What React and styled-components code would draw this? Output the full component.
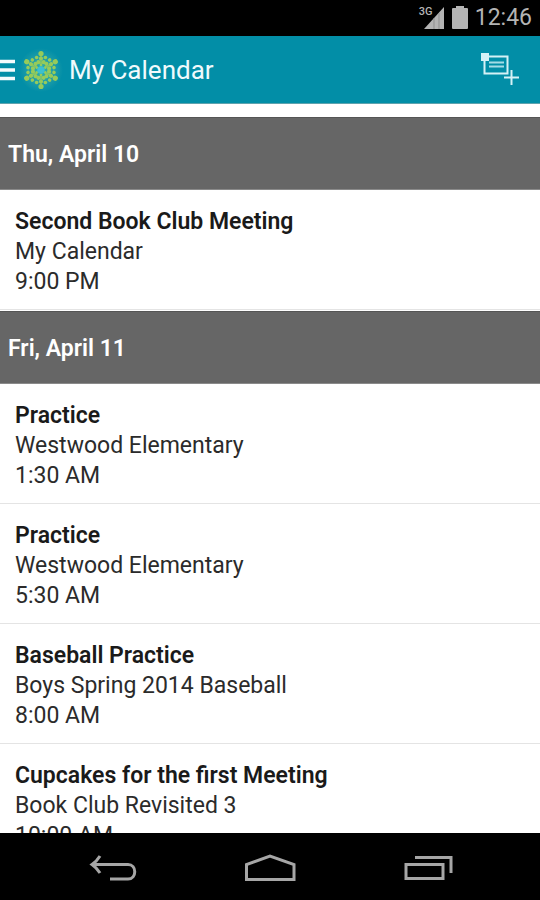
import React, { useState } from "react";
import styled, { createGlobalStyle } from "styled-components";

const GlobalStyle = createGlobalStyle`
  * {
    box-sizing: border-box;
  }

  body {
    margin: 0;
    background-color: #ffffff;
    font-family: Roboto, "Liberation Sans", sans-serif;
  }
`;

const Screen = styled.div`
  display: flex;
  flex-direction: column;
  height: 100vh;
  overflow: hidden;
`;

const StatusBar = styled.div`
  display: flex;
  align-items: center;
  justify-content: flex-end;
  flex-shrink: 0;
  gap: 7px;
  height: 36px;
  padding: 0 8px;
  background-color: #000000;
  color: #b4b4b4;
`;

const Signal = styled.div`
  display: flex;
  position: relative;
`;

const Network = styled.span`
  position: absolute;
  top: 0;
  left: 0;
  font-size: 11px;
  line-height: 11px;
  font-weight: 500;
`;

const Clock = styled.time`
  font-size: 23px;
  line-height: 36px;
`;

const AppBar = styled.header`
  display: flex;
  align-items: center;
  flex-shrink: 0;
  height: 68px;
  padding-right: 20px;
  background-color: #028ea7; // teal
  border-bottom: 1px solid #5fa3ae;
`;

const Title = styled.h1`
  flex: 1;
  margin: 0 0 0 6px;
  font-size: 26px;
  line-height: 32px;
  font-weight: normal;
  color: #f0fafc;
`;

const IconButton = styled.button`
  display: flex;
  align-items: center;
  justify-content: center;
  padding: 0;
  border: none;
  background: none;
  cursor: pointer;
`;

const MenuButton = styled(IconButton)`
  padding-right: 4px;
`;

const Agenda = styled.main`
  flex: 1;
  min-height: 0;
  padding-top: 13px;
  overflow-y: auto;
  scrollbar-width: none;
`;

const DayHeader = styled.h2`
  margin: 0;
  padding: 22px 8px 20px;
  background-color: #666666;
  border-top: 1px solid #555555;
  border-bottom: 1px solid #8a8a8a;
  font-size: 23px;
  line-height: 29px;
  font-weight: 600;
  color: #ffffff;
`;

const EventList = styled.ul`
  margin: 0;
  padding: 0 0 1px;
  list-style: none;
`;

const EventRow = styled.li`
  padding: 17px 15px 12px;
  border-bottom: 1px solid #e4e4e4;
  font-size: 23px;
  line-height: 30px;
  color: #2b2b2b;
`;

const EventName = styled.h3`
  margin: 0;
  font-size: 23px;
  line-height: 30px;
  font-weight: 600;
  color: #1a1a1a;
`;

const EventLine = styled.div`
  white-space: nowrap;
`;

const NavBar = styled.nav`
  display: flex;
  align-items: center;
  justify-content: space-between;
  flex-shrink: 0;
  height: 67px;
  padding: 3px 86px 0 88px;
  background-color: #000000;
`;

const days = [
  {
    label: "Thu, April 10",
    events: [
      { name: "Second Book Club Meeting", group: "My Calendar", time: "9:00 PM" },
    ],
  },
  {
    label: "Fri, April 11",
    events: [
      { name: "Practice", group: "Westwood Elementary", time: "1:30 AM" },
      { name: "Practice", group: "Westwood Elementary", time: "5:30 AM" },
      { name: "Baseball Practice", group: "Boys Spring 2014 Baseball", time: "8:00 AM" },
      { name: "Cupcakes for the first Meeting", group: "Book Club Revisited 3", time: "10:00 AM" },
    ],
  },
];

const SignalIcon = () => (
  <svg width="26" height="24" viewBox="0 0 26 24">
    <path d="M5 23 25 1v22z" fill="#b4b4b4" />
    <path d="M15 12v11M20 7v16" stroke="#8f8f8f" />
  </svg>
);

const BatteryIcon = () => (
  <svg width="16" height="24" viewBox="0 0 16 24">
    <path d="M4 0h8v2h3q1 0 1 1v19q0 1-1 1H1q-1 0-1-1V3q0-1 1-1h3z" fill="#b4b4b4" />
  </svg>
);

const MenuIcon = () => (
  <svg width="15" height="22" viewBox="0 0 15 22">
    <path d="M0 2.5h15M0 11h15M0 19.5h15" stroke="#f4fbfc" strokeWidth="3.6" />
  </svg>
);

// one arm of the flake, repeated every 60 degrees
const arm = [
  [0, -16.5, 2.6],
  [0, -11.5, 2.1],
  [-4.4, -12.5, 1.8],
  [4.4, -12.5, 1.8],
  [-2.6, -7.8, 2.1],
  [2.6, -7.8, 2.1],
  [0, -5, 1.4],
];

const FlakeLogo = () => (
  <svg width="44" height="44" viewBox="-22 -22 44 44">
    <defs>
      <radialGradient id="glow">
        <stop offset="0" stopColor="#35b5a8" stopOpacity="0.9" />
        <stop offset="0.6" stopColor="#2ba3a8" stopOpacity="0.7" />
        <stop offset="1" stopColor="#2ba3a8" stopOpacity="0" />
      </radialGradient>
    </defs>
    <circle r="22" fill="url(#glow)" />
    {[0, 60, 120, 180, 240, 300].map((angle) => (
      <g key={angle} transform={`rotate(${angle})`} fill="#96cb5a">
        <path d="M0-16V-6" stroke="#8cc860" strokeWidth="1.4" />
        {arm.map(([x, y, r]) => (
          <circle key={`${x},${y}`} cx={x} cy={y} r={r} />
        ))}
      </g>
    ))}
    <circle r="3.8" fill="#3cc0cf" />
  </svg>
);

const AddEventIcon = () => (
  <svg width="40" height="36" viewBox="0 0 40 36" fill="none" stroke="#d5f1f6">
    <path d="M4.500 4.500h23v17h-23z" strokeWidth="2" />
    <path d="M9 10.500h15M9 14.500h15" stroke="#a5dce6" strokeWidth="2" />
    <path d="M1 1h8v8H1z" fill="#d5f1f6" stroke="none" />
    <path d="M24 25.500h15M31.500 18v15" stroke="#028ea7" strokeWidth="5" />
    <path d="M24 25.500h15M31.500 18v15" strokeWidth="2" />
  </svg>
);

const BackIcon = () => (
  <svg width="50" height="28" viewBox="0 0 50 28" fill="none" stroke="#a6a6a6" strokeWidth="3">
    <path d="M4 10.500h36c9 0 9 14.500 0 14.500H22" />
    <path d="M12 2Q9 7 4 10.500Q9 14 12 19" />
  </svg>
);

const HomeIcon = () => (
  <svg width="52" height="28" viewBox="0 0 52 28" fill="none" stroke="#a6a6a6" strokeWidth="3">
    <path d="M1.500 25.500V10.500L25 2l24 8.500v15z" />
  </svg>
);

const RecentIcon = () => (
  <svg width="50" height="28" viewBox="0 0 50 28" fill="none" stroke="#a6a6a6" strokeWidth="3">
    <path d="M2 10.500h37v14H2z" />
    <path d="M11 3.500h36v15.500" />
  </svg>
);

const App = () => {
  const [agenda] = useState(days);

  return (
    <Screen>
      <GlobalStyle />
      <StatusBar>
        <Signal>
          <Network>3G</Network>
          <SignalIcon />
        </Signal>
        <BatteryIcon />
        <Clock>12:46</Clock>
      </StatusBar>
      <AppBar>
        <MenuButton aria-label="Open menu">
          <MenuIcon />
        </MenuButton>
        <FlakeLogo />
        <Title>My Calendar</Title>
        <IconButton aria-label="Add event">
          <AddEventIcon />
        </IconButton>
      </AppBar>
      <Agenda>
        {agenda.map((day) => (
          <section key={day.label}>
            <DayHeader>{day.label}</DayHeader>
            <EventList>
              {day.events.map((event) => (
                <EventRow key={event.time}>
                  <EventName>{event.name}</EventName>
                  <EventLine>{event.group}</EventLine>
                  <EventLine>{event.time}</EventLine>
                </EventRow>
              ))}
            </EventList>
          </section>
        ))}
      </Agenda>
      <NavBar>
        <IconButton aria-label="Back">
          <BackIcon />
        </IconButton>
        <IconButton aria-label="Home">
          <HomeIcon />
        </IconButton>
        <IconButton aria-label="Recent apps">
          <RecentIcon />
        </IconButton>
      </NavBar>
    </Screen>
  );
};

export default App;
